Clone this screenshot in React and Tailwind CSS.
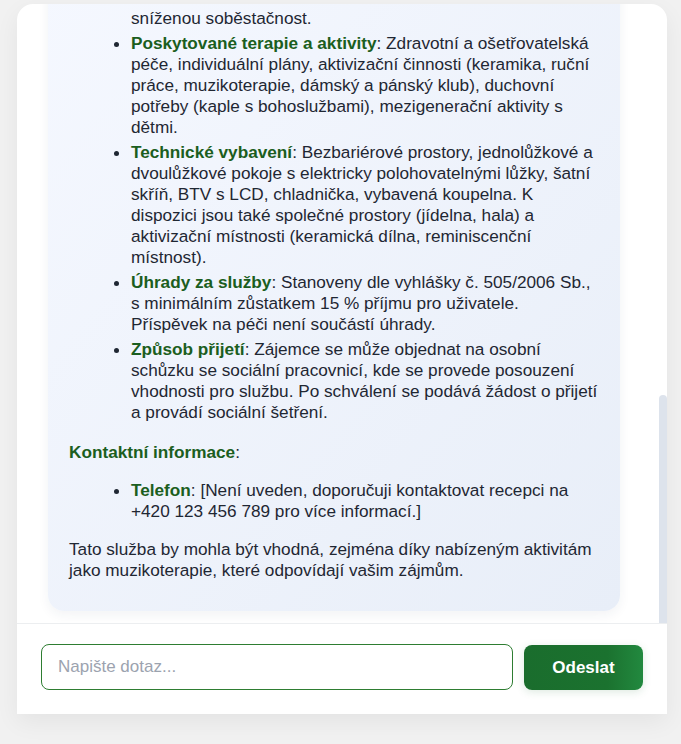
import React from "react";

function Item({ label, lines }) {
  return (
    <li>
      <strong className="font-bold text-[#1b5e20]">{label}</strong>
      {lines.map((line, i) => (
        <React.Fragment key={i}>
          {i > 0 && <br />}
          {line}
        </React.Fragment>
      ))}
    </li>
  );
}

const items = [
  {
    label: "Určeno",
    lines: [": Seniorům nad 65 let a lidem se", "sníženou soběstačnost."],
  },
  {
    label: "Poskytované terapie a aktivity",
    lines: [
      ": Zdravotní a ošetřovatelská",
      "péče, individuální plány, aktivizační činnosti (keramika, ruční",
      "práce, muzikoterapie, dámský a pánský klub), duchovní",
      "potřeby (kaple s bohoslužbami), mezigenerační aktivity s",
      "dětmi.",
    ],
  },
  {
    label: "Technické vybavení",
    lines: [
      ": Bezbariérové prostory, jednolůžkové a",
      "dvoulůžkové pokoje s elektricky polohovatelnými lůžky, šatní",
      "skříň, BTV s LCD, chladnička, vybavená koupelna. K",
      "dispozici jsou také společné prostory (jídelna, hala) a",
      "aktivizační místnosti (keramická dílna, reminiscenční",
      "místnost).",
    ],
  },
  {
    label: "Úhrady za služby",
    lines: [
      ": Stanoveny dle vyhlášky č. 505/2006 Sb.,",
      "s minimálním zůstatkem 15 % příjmu pro uživatele.",
      "Příspěvek na péči není součástí úhrady.",
    ],
  },
  {
    label: "Způsob přijetí",
    lines: [
      ": Zájemce se může objednat na osobní",
      "schůzku se sociální pracovnicí, kde se provede posouzení",
      "vhodnosti pro službu. Po schválení se podává žádost o přijetí",
      "a provádí sociální šetření.",
    ],
  },
];

export default function App() {
  return (
    <div className="min-h-screen bg-[#f1f1f1] pt-[4px] font-['Liberation_Sans',Arial,sans-serif]">
      <div className="ml-[17px] w-[650px] h-[710px] bg-white rounded-t-2xl shadow-[0_8px_24px_rgba(0,0,0,0.06)] flex flex-col overflow-hidden">
        {/* chat area, scrolled to bottom */}
        <div className="relative flex-1 min-h-0 overflow-hidden flex flex-col justify-end pl-[31px] pb-3">
          <div className="shrink-0 w-[572px] rounded-2xl bg-gradient-to-br from-[#f5f8ff] to-[#e8eef8] shadow-[0_4px_12px_rgba(30,50,90,0.06)] pl-[21px] pr-[14px] pt-5 pb-[30px] text-[17.2px] leading-[21px] text-[#1f2733] whitespace-nowrap">
            <ul className="list-disc list-outside pl-[62px] mb-[19px] space-y-1">
              {items.map((it) => (
                <Item key={it.label} label={it.label} lines={it.lines} />
              ))}
            </ul>
            <p className="mb-[17px]">
              <strong className="font-bold text-[#1b5e20]">Kontaktní informace</strong>:
            </p>
            <ul className="list-disc list-outside pl-[62px] mb-[17px]">
              <Item
                label="Telefon"
                lines={[
                  ": [Není uveden, doporučuji kontaktovat recepci na",
                  "+420 123 456 789 pro více informací.]",
                ]}
              />
            </ul>
            <p>
              Tato služba by mohla být vhodná, zejména díky nabízeným aktivitám
              <br />
              jako muzikoterapie, které odpovídají vašim zájmům.
            </p>
          </div>
          {/* scrollbar thumb */}
          <div className="absolute right-0 bottom-0 w-2 h-[228px] rounded-t-[4px] bg-[#dde3ec]" />
        </div>

        {/* input bar */}
        <div className="border-t border-[#eceef0] px-6 pt-5 pb-6 flex items-start gap-[11px]">
          <input
            type="text"
            placeholder="Napište dotaz..."
            className="flex-1 h-[46px] rounded-lg border border-[#2e7d32] px-4 text-[17px] text-[#1f2733] placeholder:text-[#9ca3af] outline-none bg-white"
          />
          <button className="w-[119px] h-[45px] mt-px rounded-lg bg-gradient-to-r from-[#1a6d2d] via-[#1b722f] via-70% to-[#22893f] text-white text-[17px] font-bold shadow-[0_2px_8px_rgba(27,110,46,0.15)]">
            Odeslat
          </button>
        </div>
      </div>
    </div>
  );
}
